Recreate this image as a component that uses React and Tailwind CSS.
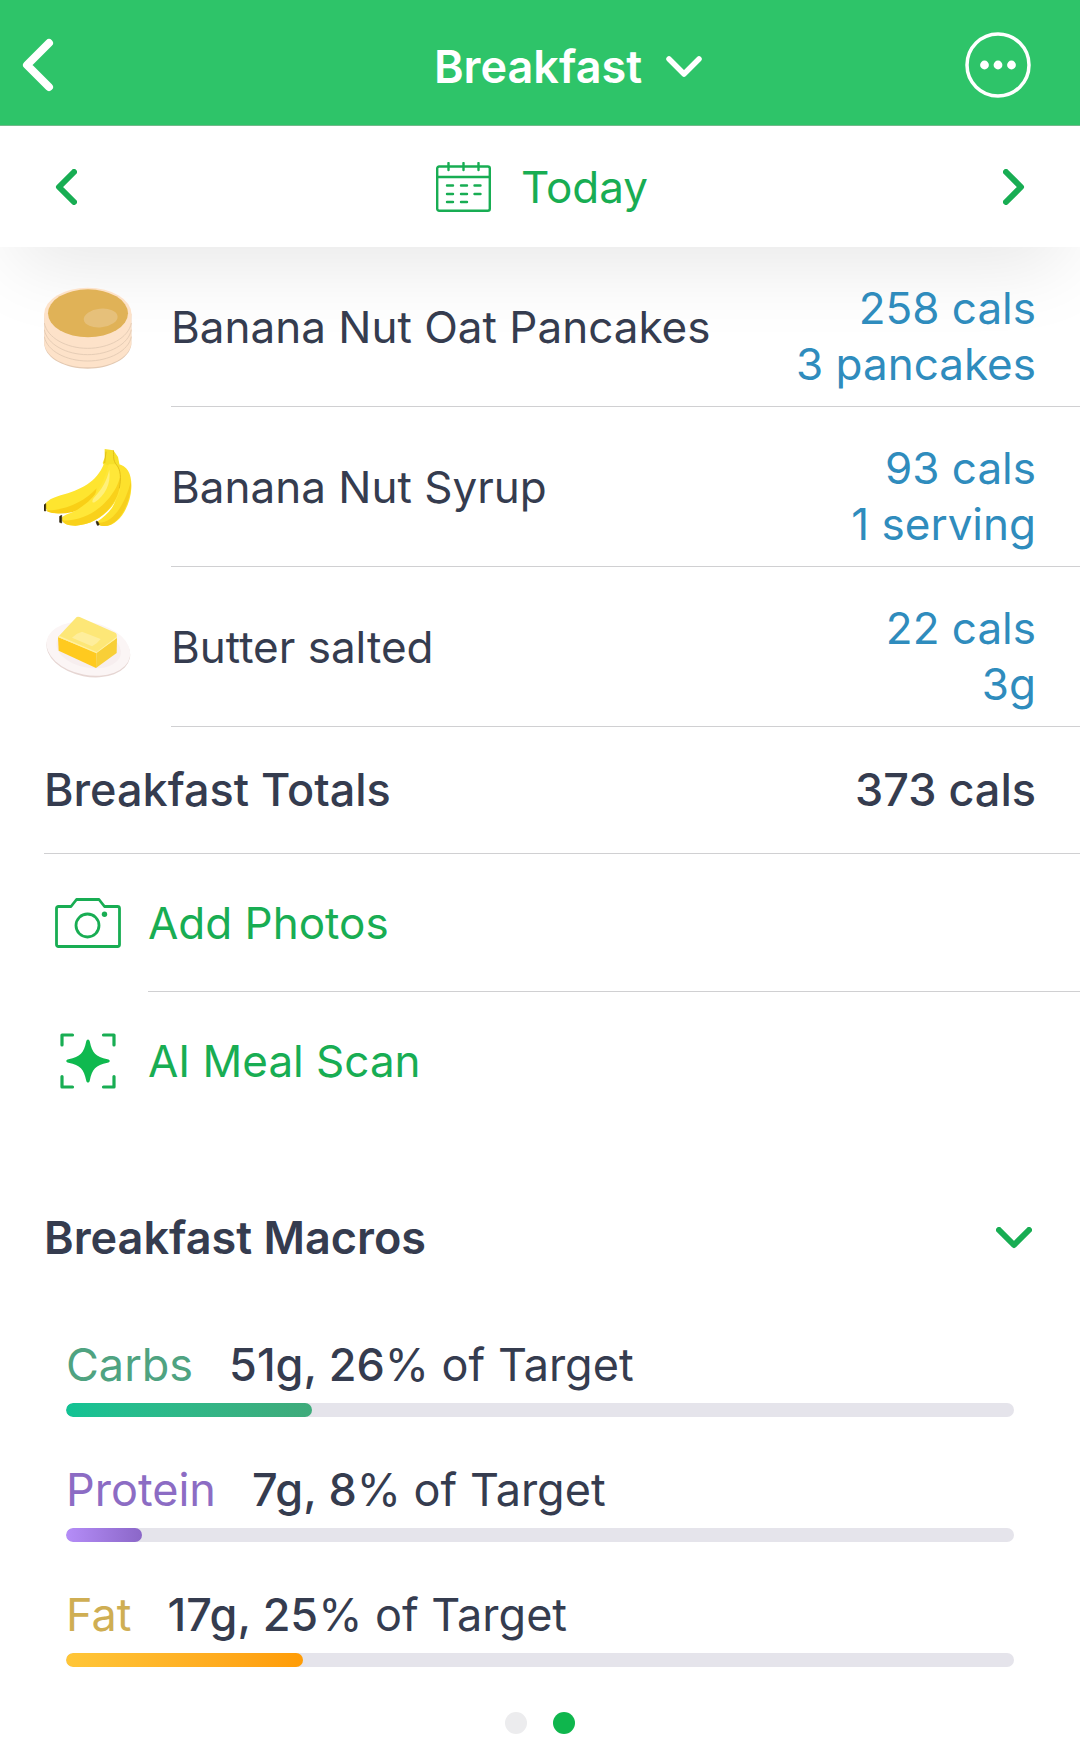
import React from "react";

function Chevron({ className, d, box, width }) {
  return (
    <svg className={className} viewBox={box} fill="none" stroke="currentColor" strokeWidth={width} strokeLinecap="round" strokeLinejoin="round" aria-hidden="true">
      <path d={d} />
    </svg>
  );
}

function PancakeIcon() {
  return (
    <svg className="size-[88px]" viewBox="42 36 264 264" aria-hidden="true">
      <path d="M43 128v94c6 42 63 71 130 71s124-29 131-71v-94z" fill="#e3c9b2" />
      <path d="M43 128v91c6 42 63 70 130 70s124-28 131-70v-91z" fill="#fde2c9" />
      <g fill="none" stroke="#e6cdb6" strokeWidth="3">
        <path d="M43 156c8 44 66 76 130 76s123-32 131-76" />
        <path d="M43 176c8 44 66 75 130 75s123-31 131-75" />
        <path d="M43 197c8 43 66 73 130 73s123-30 131-73" />
      </g>
      <ellipse cx="173.500" cy="129" rx="131" ry="79" fill="#fde2c9" />
      <path d="M43 129c0 44 59 82 130 82s131-38 131-82" fill="#fde2c9" />
      <ellipse cx="174" cy="127" rx="120" ry="72" fill="#e0b257" />
      <ellipse cx="212" cy="141" rx="51" ry="28" fill="#e6c07a" transform="rotate(-6 212 141)" />
    </svg>
  );
}

function BananaIcon() {
  return (
    <svg className="size-[88px]" viewBox="42 36 264 264" aria-hidden="true">
      <path d="M262 100c32 2 44 34 42 70-2 56-38 117-82 115-12 0-18-4-22-12 30-20 50-40 58-70 8-30 2-70 4-103z" fill="#fde12c" />
      <path d="M303 150c2 60-34 136-82 135-10 0-16-4-20-10 46 6 84-54 102-125z" fill="#f7cf1c" />
      <path d="M224 54l26 4 14 20 6 30-40 6-12-18 6-16z" fill="#f6e02a" />
      <path d="M222 98c-22 56-70 78-130 95-24 7-42 16-48 30 2 18 20 24 42 24 70-4 140-50 160-140z" fill="#fee52f" />
      <path d="M48 238c60 2 120-30 152-66l-10 44c-40 26-80 34-112 31-16-1-26-4-30-9z" fill="#f9cf16" />
      <path d="M236 100c-16 66-46 108-94 136-20 12-42 14-48 26 2 16 20 22 42 22 80-4 146-76 136-148-2-16-6-26-12-36z" fill="#ffe738" />
      <path d="M96 268c70 4 130-40 162-98 6-12 10-22 12-32 8 70-56 142-134 146-20 0-34-4-40-16z" fill="#f9d11b" />
      <path d="M238 116c6 44-14 78-44 98 -10 4-8-8 0-16 22-24 36-48 44-82z" fill="#fff07a" />
      <path d="M250 58c2 18-2 30 10 44 12 14 14 40 8 70M228 62l-4 34" fill="none" stroke="#e3bf16" strokeWidth="3" />
      <path d="M42 222l5-4v22l-5-1zM89 256l6-3v23l-6-2zM198 272c4-4 9 4 9 10l-5 1z" fill="#30260c" stroke="#30260c" strokeWidth="2" />
    </svg>
  );
}

function ButterIcon() {
  return (
    <svg className="size-[88px]" viewBox="42 36 264 264" aria-hidden="true">
      <ellipse cx="175" cy="177" rx="127" ry="80" transform="rotate(11 175 177)" fill="#e6d6d3" />
      <ellipse cx="175" cy="173" rx="127" ry="79" transform="rotate(11 175 173)" fill="#fbf5f5" />
      <ellipse cx="176" cy="172" rx="98" ry="58" transform="rotate(11 176 172)" fill="#f7eeef" />
      <path d="M84 138l2 41 112 52 1-47z" fill="#ffca1f" />
      <path d="M199 184l62-44-1 46-62 45z" fill="#f8cf37" />
      <path d="M84 138l56-60q4-2 9 0l107 47q6 3 4 15l-61 45z" fill="#fde777" />
      <path d="M84 138l3-4 113 49 60-46v5l-61 45z" fill="#fff0a0" />
      <path d="M126 140q14-14 30-18l56 22q-10 14-26 22z" fill="#feee9c" />
    </svg>
  );
}

function CalendarIcon() {
  return (
    <svg className="h-[50px] w-[55px]" viewBox="0 0 55 50" fill="none" stroke="currentColor" strokeWidth="2.400" strokeLinecap="round" aria-hidden="true">
      <rect x="1.200" y="4.500" width="52.600" height="44.300" rx="2" />
      <path d="M1 15h53M12.500 1v7M27.500 1v7M42.500 1v7" />
      <path d="M11 23.500h6M25 23.500h6M38.500 23.500h6M11 32h6M25 32h6M38.500 32h6M11 40h6M25 40h6" />
    </svg>
  );
}

function CameraIcon() {
  return (
    <svg className="h-[50px] w-[66px]" viewBox="0 0 66 50" fill="none" stroke="currentColor" strokeWidth="2.800" strokeLinejoin="round" aria-hidden="true">
      <path d="M3.500 8.500H16l5.500-7H44l5.500 7h13q2 0 2 2v36q0 2-2 2h-59q-2 0-2-2v-36q0-2 2-2z" />
      <circle cx="32.500" cy="27.500" r="11.500" />
      <circle cx="49.500" cy="16.300" r="2.700" fill="currentColor" stroke="none" />
    </svg>
  );
}

function ScanIcon() {
  return (
    <svg className="size-[56px]" viewBox="0 0 56 56" fill="none" stroke="currentColor" strokeWidth="3.200" strokeLinecap="round" strokeLinejoin="round" aria-hidden="true">
      <path d="M2 12V2h10.500M43.500 2H54v10M54 43.500V54H43.500M12.500 54H2V43.500" />
      <path d="M28 6.500c1 0 1.600 1 1.800 2 2.400 11.500 5.700 15 17.700 17.700 3 .6 3 3 0 3.600C35.500 32.500 32.200 36 29.800 47.500c-.4 2.800-3.200 2.800-3.600 0C23.800 36 20.500 32.500 8.500 29.800c-3-.6-3-3 0-3.600C20.500 23.500 23.800 20 26.200 8.500c.2-1 .8-2 1.800-2z" fill="#0fb94f" stroke="none" />
    </svg>
  );
}

const foods = [
  { name: "Banana Nut Oat Pancakes", cals: "258 cals", amount: "3 pancakes", Icon: PancakeIcon },
  { name: "Banana Nut Syrup", cals: "93 cals", amount: "1 serving", Icon: BananaIcon },
  { name: "Butter salted", cals: "22 cals", amount: "3g", Icon: ButterIcon },
];

const macros = [
  { name: "Carbs", grams: "51g", percent: 26, text: "text-[#4fa381]", bar: "from-[#11c394] to-[#3fab7b]" },
  { name: "Protein", grams: "7g", percent: 8, text: "text-[#8c6cc4]", bar: "from-[#b58df8] to-[#8b67c8]" },
  { name: "Fat", grams: "17g", percent: 25, text: "text-[#cfae53]", bar: "from-[#ffc638] to-[#ff9c05]" },
];

export default function App() {
  return (
    <div className="min-h-screen bg-white font-['Inter',sans-serif] text-[44px] leading-[56px] text-[#353c4f]">
      <header className="relative z-10 grid h-[126px] grid-cols-[1fr_auto_1fr] items-center border-b border-[#72b98b] bg-[#2ec469] pt-1 text-white">
        <button type="button" aria-label="Back" className="ml-[22px] justify-self-start">
          <Chevron className="h-[54px] w-8" box="0 0 32 54" d="M27 5L5 27L27 49" width="8" />
        </button>
        <button type="button" className="mt-1 ml-14 flex items-center gap-6 text-[45px] font-semibold">
          Breakfast
          <Chevron className="h-[22px] w-9" box="0 0 36 22" d="M3 3L18 18L33 3" width="5.500" />
        </button>
        <button type="button" aria-label="More options" className="mr-[49px] justify-self-end">
          <svg className="size-[66px]" viewBox="0 0 66 66" fill="currentColor" aria-hidden="true">
            <circle cx="33" cy="33" r="31" fill="none" stroke="currentColor" strokeWidth="3.500" />
            <circle cx="19.500" cy="33" r="4.400" />
            <circle cx="33" cy="33" r="4.400" />
            <circle cx="46.500" cy="33" r="4.400" />
          </svg>
        </button>
      </header>

      <nav aria-label="Day" className="flex h-[121px] items-center justify-between bg-white px-[55px] text-[#18ad53] shadow-[0_32px_80px_-16px_rgba(0,0,0,0.1)]">
        <button type="button" aria-label="Previous day">
          <Chevron className="h-9 w-[22px]" box="0 0 22 36" d="M19 3L4 18L19 33" width="6" />
        </button>
        <button type="button" className="ml-1 flex items-center gap-[30px]">
          <CalendarIcon />
          Today
        </button>
        <button type="button" aria-label="Next day">
          <Chevron className="h-9 w-[22px]" box="0 0 22 36" d="M3 3L18 18L3 33" width="6" />
        </button>
      </nav>

      <main>
        <ul>
          {foods.map(({ name, cals, amount, Icon }) => (
            <li key={name} className="flex h-40 items-center gap-[39px] pl-11">
              <Icon />
              <div className="flex h-full flex-1 items-center justify-between border-b border-[#d0d0d2] pr-[44px]">
                <span>{name}</span>
                <span className="pt-[18px] text-right text-[#2f8cbd]">
                  <span className="block">{cals}</span>
                  <span className="block">{amount}</span>
                </span>
              </div>
            </li>
          ))}
        </ul>

        <div className="ml-11 flex h-[127px] items-center justify-between border-b border-[#d0d0d2] pr-[44px] text-[45px] font-medium">
          <h2>Breakfast Totals</h2>
          <span>373 cals</span>
        </div>

        <div className="text-[#18ad53]">
          <button type="button" className="flex h-[138px] w-full items-center pl-11 text-left">
            <span className="flex w-[104px] shrink-0 pl-[11px]"><CameraIcon /></span>
            <span className="flex h-full flex-1 items-center border-b border-[#d0d0d2]">Add Photos</span>
          </button>
          <button type="button" className="flex h-[138px] w-full items-center pl-11 text-left">
            <span className="flex w-[104px] shrink-0 pl-4"><ScanIcon /></span>
            <span>AI Meal Scan</span>
          </button>
        </div>

        <section className="pt-20 text-[45px]">
          <button type="button" aria-expanded="true" className="flex w-full items-center justify-between pr-12 pl-11 text-left">
            <span className="font-semibold">Breakfast Macros</span>
            <Chevron className="h-[22px] w-9 text-[#18ad53]" box="0 0 36 22" d="M3 3L18 18L33 3" width="6" />
          </button>
          <div className="flex flex-col gap-[45px] px-[66px] pt-[71px]">
            {macros.map((m) => (
              <div key={m.name}>
                <p className="flex gap-9 whitespace-nowrap">
                  <span className={m.text}>{m.name}</span>
                  <span>
                    <span className="font-medium">{m.grams}, {m.percent}</span>% of Target
                  </span>
                </p>
                <div role="progressbar" aria-label={m.name} aria-valuenow={m.percent} aria-valuemin={0} aria-valuemax={100} className="mt-2.5 h-3.5 overflow-hidden rounded-full bg-[#e5e4eb]">
                  <div className={`h-full rounded-full bg-linear-to-r ${m.bar}`} style={{ width: `${m.percent}%` }} />
                </div>
              </div>
            ))}
          </div>
        </section>
        <div className="flex justify-center gap-[26px] pt-[45px]">
          <button type="button" aria-label="Page 1" className="size-[22px] rounded-full bg-[#ececee]" />
          <button type="button" aria-label="Page 2" aria-current="true" className="size-[22px] rounded-full bg-[#0fb64d]" />
        </div>
      </main>
    </div>
  );
}
